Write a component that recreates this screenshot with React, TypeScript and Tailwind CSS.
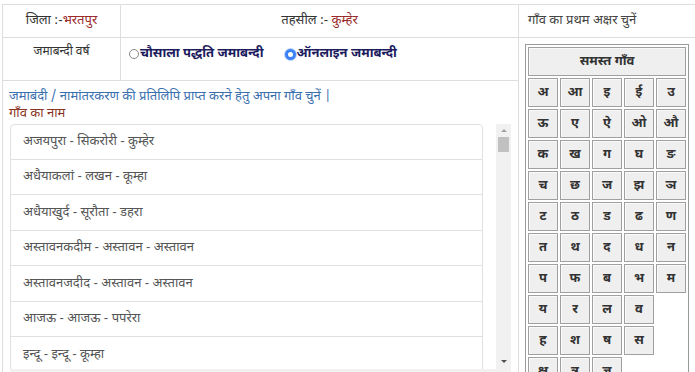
import React from "react";

const ROWS: string[][] = [
  ["अ", "आ", "इ", "ई", "उ"],
  ["ऊ", "ए", "ऐ", "ओ", "औ"],
  ["क", "ख", "ग", "घ", "ङ"],
  ["च", "छ", "ज", "झ", "ञ"],
  ["ट", "ठ", "ड", "ढ", "ण"],
  ["त", "थ", "द", "ध", "न"],
  ["प", "फ", "ब", "भ", "म"],
  ["य", "र", "ल", "व", ""],
  ["ह", "श", "ष", "स", ""],
  ["क्ष", "त्र", "ज्ञ", "", ""],
];

const VILLAGES = [
  "अजयपुरा - सिकरोरी - कुम्हेर",
  "अधैयाकलां - लखन - कूम्हा",
  "अधैयाखुर्द - सूरौता - डहरा",
  "अस्तावनकदीम - अस्तावन - अस्तावन",
  "अस्तावनजदीद - अस्तावन - अस्तावन",
  "आजऊ - आजऊ - पपरेरा",
  "इन्दू - इन्दू - कूम्हा",
];

export default function App() {
  return (
    <div
      className="w-[695px] h-[372px] overflow-hidden bg-white pt-[4px] pl-[2px] text-[#333]"
      style={{ fontFamily: '"Noto Sans Devanagari", "Lohit Devanagari", "Noto Sans", sans-serif' }}
    >
      <div className="flex w-[720px] h-[400px] border-t border-l border-[#dedede]">
        {/* left */}
        <div className="w-[516px] shrink-0 border-r border-[#dedede] flex flex-col">
          <div className="h-[33px] flex border-b border-[#dedede]">
            <div className="w-[118px] border-r border-[#dedede] flex items-center justify-center text-[13px]">
              <span>जिला :-</span>
              <span className="text-[#9b2a2a]">भरतपुर</span>
            </div>
            <div className="flex-1 flex items-center justify-center text-[13px]">
              <span>तहसील :-&nbsp;</span>
              <span className="text-[#9b2a2a]">कुम्हेर</span>
            </div>
          </div>
          <div className="h-[43px] flex border-b border-[#dedede]">
            <div className="w-[118px] border-r border-[#dedede] text-center text-[12px] pt-[6px] leading-[16px]">
              जमाबन्दी वर्ष
            </div>
            <div className="flex-1 flex items-start pl-[8px] pt-[7px] gap-[21px] text-[13px] font-bold text-[#1c1c5e] leading-[18px]">
              <label className="flex items-center">
                <span className="w-[10px] h-[10px] rounded-full border border-[#8a8a8a] bg-white mr-[1px]" />
                चौसाला पद्धति जमाबन्दी
              </label>
              <label className="flex items-center">
                <span className="w-[11px] h-[11px] rounded-full border-[3px] border-[#3b82f6] bg-white mr-[1px] shadow-[0_0_0_1px_#bcd4fb]" />
                ऑनलाइन जमाबन्दी
              </label>
            </div>
          </div>
          <div className="flex-1 pt-[7px] pl-[6px]">
            <div className="text-[13px] leading-[17px] text-[#3a70ae]">
              जमाबंदी / नामांतरकरण की प्रतिलिपि प्राप्त करने हेतु अपना गाँव चुनें |
            </div>
            <div className="text-[13px] leading-[17px] text-[#8a3322]">गाँव का नाम</div>
            <div className="mt-[2px] ml-[1px] flex h-[250px] w-[501px] relative">
              <div className="w-[473px] shrink-0 overflow-hidden">
                {VILLAGES.map((v, i) => (
                  <div
                    key={v}
                    className={
                      "h-[35.5px] flex items-center pl-[12px] text-[13px] text-[#555] border-l border-r border-b border-[#e0e0e0] " +
                      (i === 0 ? "border-t rounded-t-[4px]" : "")
                    }
                  >
                    {v}
                  </div>
                ))}
              </div>
              <div className="w-[13px] shrink-0" />
              <div className="w-[15px] shrink-0 h-[245px] bg-[#f1f1f1] flex flex-col items-center">
                <div className="mt-[5px] w-0 h-0 border-l-[3px] border-r-[3px] border-b-[3px] border-l-transparent border-r-transparent border-b-[#a3a3a3]" />
                <div className="mt-[5px] w-[11px] h-[15px] bg-[#c1c1c1]" />
                <div className="flex-1" />
                <div className="mb-[6px] w-0 h-0 border-l-[3px] border-r-[3px] border-t-[3px] border-l-transparent border-r-transparent border-t-[#505050]" />
              </div>
              <div className="absolute left-0 top-[245px] w-[501px] h-[5px] bg-[#f1f1f1]" />
            </div>
          </div>
        </div>
        {/* right */}
        <div className="flex-1 flex flex-col">
          <div className="h-[33px] border-b border-[#dedede] flex items-center pl-[9px] text-[13px] text-[#444]">
            गाँव का प्रथम अक्षर चुनें
          </div>
          <div className="ml-[6px] mt-[6px] w-[164px] border-t border-l border-r border-[#9a9a9a] p-[2px] flex flex-col gap-[2px]">
            <div className="h-[29px] flex items-center justify-center bg-[#efefef] border border-[#a0a0a0] shadow-[inset_1px_1px_0_#fafafa] text-[13px] font-bold text-[#333]">
              समस्त गाँव
            </div>
            {ROWS.map((row, ri) => (
              <div key={ri} className="flex gap-[2px]">
                {row.map((l, ci) =>
                  l ? (
                    <div
                      key={ci}
                      className="w-[30px] h-[29px] flex items-center justify-center bg-[#efefef] border border-[#a0a0a0] shadow-[inset_1px_1px_0_#fafafa] text-[13px] font-bold text-[#333]"
                    >
                      {l}
                    </div>
                  ) : (
                    <div key={ci} className="w-[30px] h-[29px]" />
                  )
                )}
              </div>
            ))}
          </div>
        </div>
      </div>
    </div>
  );
}
